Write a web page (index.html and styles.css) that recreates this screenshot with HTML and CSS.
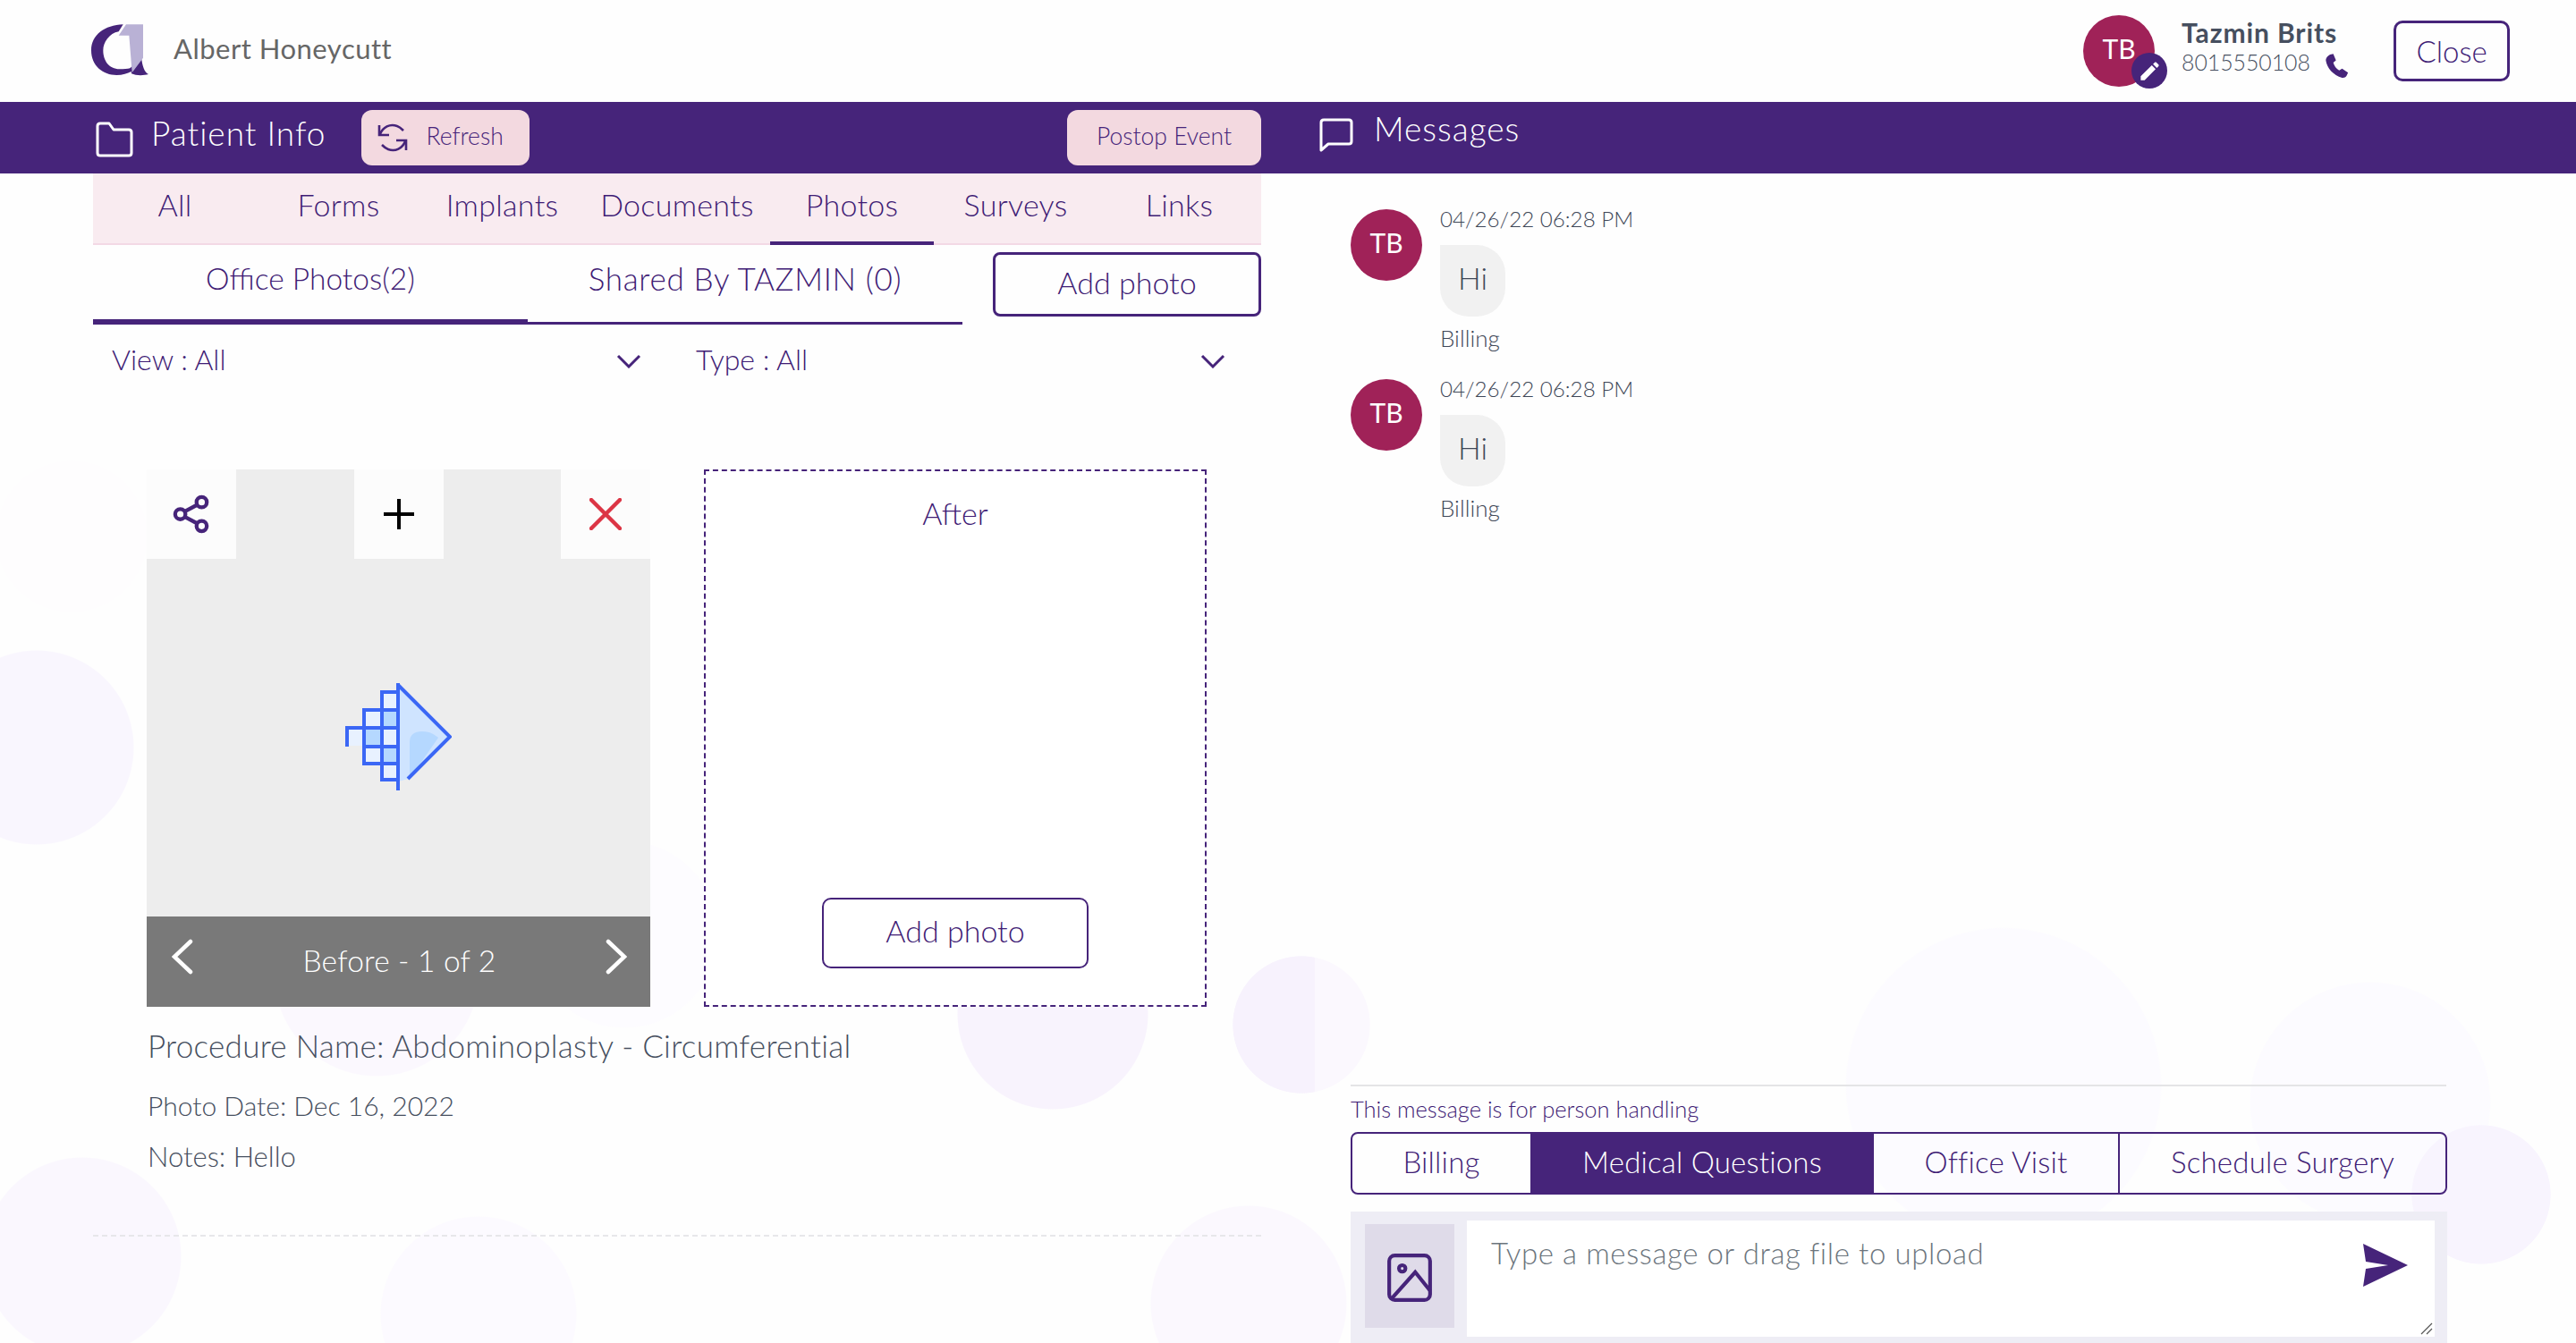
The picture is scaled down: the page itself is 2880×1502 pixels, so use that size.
FILE: index.html
```html
<!DOCTYPE html>
<html lang="en">
<head>
<meta charset="utf-8">
<title>Patient</title>
<link rel="stylesheet" href="styles.css">
</head>
<body>
<header class="topbar">
  <div class="brand">
    <svg class="logo" viewBox="0 0 192 172"><path fill="#46247a" d="M107 0C45 2 0 35 0 87c0 53 40 83 85 83 20 0 37-5 49-12l1 7c15 7 40 7 57 2-14-7-20-27-24-55l-38 35c-8 2-20 3-35 3-35 0-55-28-55-63 0-27 20-57 52-63z"/><path fill="#b9b1d5" d="M92 37L117 0h57v112l-37 50-10-125z"/></svg>
    <span class="brand-name">Albert Honeycutt</span>
  </div>
  <div class="user">
    <div class="avatar">TB
      <span class="badge"><svg viewBox="0 0 24 24"><path fill="#fff" d="M3 17.2V21h3.800L17.800 10l-3.800-3.800zM20.700 7c.4-.4.4-1 0-1.400l-2.300-2.300c-.4-.4-1-.4-1.400 0l-1.800 1.800 3.800 3.800z"/></svg></span>
    </div>
    <div class="user-text">
      <div class="user-name">Tazmin Brits</div>
      <div class="user-phone">8015550108
        <svg class="phone" viewBox="0 0 24 24"><path fill="#46247a" d="M6.600 1.500 9.300 1l2.400 5.800-2.400 2c.8 2.900 2.500 5.300 5.300 7l2.600-1.700 5.300 3.700-1.300 2.800c-.9 1.300-2.400 2.100-4 1.700C9.300 20.200 3.600 13.500 2.700 7c-.2-2.300 1.700-4.500 3.900-5.500z"/></svg>
      </div>
    </div>
    <button class="close-btn">Close</button>
  </div>
</header>

<main class="layout">
  <section class="patient">
    <div class="band patient-band">
      <svg class="band-icon" viewBox="0 0 42 40"><path fill="none" stroke="#fff" stroke-width="3" stroke-linejoin="round" d="M2 5q0-3 3-3h10l5 7h17q3 0 3 3v23q0 3-3 3H5q-3 0-3-3z"/></svg>
      <span class="band-title">Patient Info</span>
      <button class="band-btn refresh">
        <svg viewBox="0 0 36 36"><g fill="none" stroke="#46247a" stroke-width="2.600"><path d="M4 14C7 6 15 2 23 5c3 1 5 3 7 5"/><path d="M32 22c-3 8-11 12-19 9-3-1-5-3-7-5"/><path d="M3 4v11h11M33 32V21H22"/></g></svg>
        <span class="btn-label">Refresh</span>
      </button>
      <button class="band-btn postop"><span class="btn-label">Postop Event</span></button>
    </div>
    <nav class="tabs">
      <a class="tab">All</a><a class="tab">Forms</a><a class="tab">Implants</a><a class="tab">Documents</a><a class="tab active">Photos</a><a class="tab">Surveys</a><a class="tab">Links</a>
    </nav>
    <div class="subtabs">
      <a class="subtab active">Office Photos(2)</a>
      <a class="subtab wide">Shared By TAZMIN (0)</a>
      <button class="outline-btn sub-add">Add photo</button>
    </div>
    <div class="filters">
      <div class="filter">View : All <svg class="chev" viewBox="0 0 28 16"><path fill="none" stroke="#46247a" stroke-width="3" d="M2 2l12 12L26 2"/></svg></div>
      <div class="filter">Type : All <svg class="chev" viewBox="0 0 28 16"><path fill="none" stroke="#46247a" stroke-width="3" d="M2 2l12 12L26 2"/></svg></div>
    </div>
    <div class="photos">
      <div class="card">
        <div class="card-tools">
          <span class="tool"><svg viewBox="0 0 44 46"><g fill="none" stroke="#46247a" stroke-width="4.500"><circle cx="34" cy="9" r="6"/><circle cx="9" cy="23" r="6"/><circle cx="34" cy="37" r="6"/><path d="M14 20l15-8M14 26l15 8"/></g></svg></span>
          <span class="tool"><svg viewBox="0 0 36 36"><path stroke="#000" stroke-width="4" d="M18 1v34M1 18h34"/></svg></span>
          <span class="tool"><svg viewBox="0 0 36 36"><path stroke="#dc3545" stroke-width="4.500" stroke-linecap="round" d="M2 2l32 32M34 2L2 34"/></svg></span>
        </div>
        <div class="card-image">
          <svg class="placeholder" viewBox="0 0 119 120">
            <path fill="#cfe4ff" d="M59 2l58 58-46 47-12 3z"/>
            <path fill="#b5d8ff" d="M72 107V66q0-12 14-12c10 0 14 4 18 7z"/>
            <path fill="#e8f1ff" d="M40 10h19v98H40zM20 30h20v60H20zM4 50h16v20H4z"/>
            <path fill="#b5d8ff" d="M40 30h19v20H40zM20 50h20v21H20zM40 71h19v19H40z"/>
            <g fill="none" stroke="#3b67f5" stroke-width="4">
              <path d="M59 0v120M59 2l58 58-47 47"/>
              <path d="M59 10H41v98h18M59 30H21v60h38M59 50H2v21M21 71h38M41 30v60"/>
            </g>
          </svg>
        </div>
        <div class="card-foot">
          <svg viewBox="0 0 24 40"><path fill="none" stroke="#fff" stroke-width="4.500" stroke-linecap="round" d="M21 3L3 20l18 17"/></svg>
          <span class="foot-label">Before - 1 of 2</span>
          <svg viewBox="0 0 24 40"><path fill="none" stroke="#fff" stroke-width="4.500" stroke-linecap="round" d="M3 3l18 17L3 37"/></svg>
        </div>
      </div>
      <div class="after">
        <div class="after-title">After</div>
        <button class="outline-btn after-add">Add photo</button>
      </div>
    </div>
    <div class="details">
      <p class="proc">Procedure Name: Abdominoplasty - Circumferential</p>
      <p class="date">Photo Date: Dec 16, 2022</p>
      <p class="notes">Notes: Hello</p>
    </div>
    <div class="dash"></div>
  </section>

  <section class="messages">
    <div class="band messages-band">
      <svg class="msg-icon" viewBox="0 0 38 38"><path fill="none" stroke="#fff" stroke-width="3" stroke-linejoin="round" d="M2 5q0-3 3-3h28q3 0 3 3v21q0 3-3 3H10l-8 7z"/></svg>
      <span class="band-title">Messages</span>
    </div>
    <div class="thread">
      <article class="msg">
        <div class="avatar">TB</div>
        <div class="msg-body">
          <div class="msg-time">04/26/22 06:28 PM</div>
          <div class="bubble">Hi</div>
          <div class="msg-tag">Billing</div>
        </div>
      </article>
      <article class="msg">
        <div class="avatar">TB</div>
        <div class="msg-body">
          <div class="msg-time">04/26/22 06:28 PM</div>
          <div class="bubble">Hi</div>
          <div class="msg-tag">Billing</div>
        </div>
      </article>
    </div>
    <div class="compose">
      <div class="compose-label">This message is for person handling</div>
      <div class="segments">
        <a class="seg seg-billing">Billing</a>
        <a class="seg seg-medical active">Medical Questions</a>
        <a class="seg seg-office">Office Visit</a>
        <a class="seg seg-surgery">Schedule Surgery</a>
      </div>
      <div class="composer">
        <div class="attach">
          <svg viewBox="0 0 48 52"><g fill="none" stroke="#46247a" stroke-width="4"><rect x="2" y="2" width="44" height="48" rx="6"/><circle cx="16" cy="16" r="3.500"/><path d="M5 48L30 20l16 20"/></g></svg>
        </div>
        <div class="input">
          <span class="placeholder-text">Type a message or drag file to upload</span>
          <svg class="send" viewBox="0 0 50 48"><path fill="#46247a" d="M0 0l50 24L0 48l3-20 25-4-25-4z"/></svg>
          <svg class="grip" viewBox="0 0 14 14"><path stroke="#555" stroke-width="1.200" d="M13 1L1 13M13 7l-6 6"/></svg>
        </div>
      </div>
    </div>
  </section>
</main>
</body>
</html>
```
FILE: styles.css
```css
* { box-sizing: border-box; }
html, body { margin: 0; height: 100%; }
body {
  width: 2880px;
  height: 1502px;
  overflow: hidden;
  font-family: "Lato", "Open Sans", sans-serif;
  font-weight: 300;
  color: #3f1c75;
  background-color: #fefefe;
  background-image:
    radial-gradient(circle 77px at 1455px 1146px, #f7f2fd 99%, transparent 100%),
    radial-gradient(circle 77px at 1455px 1146px, #fbf8fe 99%, transparent 100%),
    radial-gradient(circle 109px at 41px 836px, #f9f6fe 99%, transparent 100%),
    radial-gradient(circle 111px at 92px 1405px, #faf7fe 99%, transparent 100%),
    radial-gradient(circle 107px at 1177px 1134px, #f8f3fd 99%, transparent 100%),
    radial-gradient(circle 115px at 421px 1089px, #fbf8fe 99%, transparent 100%),
    radial-gradient(circle 105px at 698px 1045px, #fdfcff 99%, transparent 100%),
    radial-gradient(circle 110px at 1396px 1458px, #fbf8fe 99%, transparent 100%),
    radial-gradient(circle 110px at 535px 1470px, #fcfaff 99%, transparent 100%),
    radial-gradient(circle 78px at 2774px 1336px, #f8f4fe 99%, transparent 100%),
    radial-gradient(circle 177px at 2240px 1214px, #fcfbff 99%, transparent 100%),
    radial-gradient(circle 135px at 2650px 1233px, #fcfbff 99%, transparent 100%),
    radial-gradient(circle 85px at 80px 600px, #fefdfe 99%, transparent 100%);
  background-size: 1470px 1502px, 100% 100%, 100% 100%, 100% 100%, 100% 100%, 100% 100%, 100% 100%, 100% 100%, 100% 100%, 100% 100%, 100% 100%, 100% 100%, 100% 100%;
  background-repeat: no-repeat;
}
button { font: inherit; color: inherit; background: none; cursor: pointer; }
p { margin: 0; }

/* top bar */
.topbar {
  height: 114px;
  display: flex;
  justify-content: space-between;
  align-items: center;
  padding: 0 74px 0 102px;
}
.brand { display: flex; align-items: center; gap: 28px; margin-top: -2px; }
.logo { width: 64px; height: 58px; }
.brand-name { font-size: 31px; font-weight: 400; color: #666; letter-spacing: .5px; margin-bottom: 4px; }
.user { display: flex; align-items: center; }
.avatar {
  width: 80px; height: 80px; flex: none;
  border-radius: 50%;
  background: #a02258;
  color: #fff;
  font-size: 30px;
  font-weight: 400;
  display: flex; align-items: center; justify-content: center;
  padding-bottom: 6px;
  position: relative;
}
.badge {
  position: absolute; right: -14px; bottom: -2px;
  width: 40px; height: 40px;
  border-radius: 50%;
  background: #46247a;
  display: flex; align-items: center; justify-content: center;
}
.badge svg { width: 27px; height: 27px; }
.user-text { width: 185px; margin-left: 30px; color: #464f5f; margin-top: -4px; }
.user-name { font-size: 30px; font-weight: 700; letter-spacing: .9px; line-height: 30px; white-space: nowrap; }
.user-phone { font-size: 24.800px; line-height: 26px; display: flex; align-items: center; gap: 14px; white-space: nowrap; }
.phone { width: 30px; height: 30px; flex: none; margin-top: 8px; }
.close-btn {
  width: 130px; height: 68px;
  margin-left: 52px;
  border: 3px solid #46247a;
  border-radius: 10px;
  font-size: 33px;
  padding: 0;
}

/* layout */
.layout { display: grid; grid-template-columns: 1410px 1fr; height: 1388px; }
.patient { padding-left: 104px; display: flex; flex-direction: column; }
.band { height: 80px; background: #46247a; color: #fff; display: flex; }
.patient-band { margin-left: -104px; padding: 0 0 0 107px; align-items: center; }
.band-icon { width: 42px; height: 40px; margin-top: 4px; }
.band-title { font-size: 37px; letter-spacing: 1px; }
.patient-band .band-title { margin-left: 20px; margin-bottom: 11px; }
.band-btn {
  height: 62px;
  border: 0;
  border-radius: 12px;
  background: #f3d9e0;
  color: #46247a;
  font-size: 26.500px;
  display: flex; align-items: center;
  padding: 0;
}
.btn-label { margin-bottom: 4px; }
.refresh { width: 188px; margin-left: 40px; padding-left: 17px; gap: 19px; }
.refresh svg { width: 36px; height: 36px; }
.postop { width: 217px; margin-left: auto; justify-content: center; }

/* tabs */
.tabs {
  height: 80px;
  display: grid;
  grid-template-columns: repeat(3, 183px) 208px repeat(3, 183px);
  background: #f9ebf0;
  border-bottom: 2px solid #f3d9e5;
}
.tab {
  font-size: 34px;
  display: flex; align-items: center; justify-content: center;
  padding-bottom: 10px;
  letter-spacing: .3px;
}
.tab.active { border-bottom: 4px solid #46247a; margin-bottom: -2px; padding-bottom: 8px; }

.subtabs { height: 89px; display: flex; align-items: flex-start; }
.subtab {
  width: 486px; height: 89px;
  font-size: 33.500px;
  display: flex; align-items: center; justify-content: center;
  padding-bottom: 12px;
  border-bottom: 3px solid #46247a;
}
.subtab.wide { font-size: 35px; letter-spacing: .7px; }
.subtab.active { border-bottom-width: 6px; padding-bottom: 9px; }
.outline-btn {
  border: 3px solid #46247a;
  border-radius: 8px;
  font-size: 34px;
  padding: 0 0 6px;
}
.sub-add { width: 300px; height: 72px; margin: 8px 0 0 34px; }

.filters { height: 80px; display: grid; grid-template-columns: 1fr 1fr; padding-top: 20px; }
.filter {
  font-size: 32px;
  height: 40px;
  display: flex; align-items: center; justify-content: space-between;
  padding: 0 40px 3px 21px;
}
.chev { width: 28px; height: 16px; margin-top: 5px; }

/* photos */
.photos {
  display: grid;
  grid-template-columns: 563px 562px;
  gap: 60px;
  padding: 82px 0 0 60px;
}
.card { display: flex; flex-direction: column; height: 601px; background: #ededed; }
.card-tools { display: flex; justify-content: space-between; }
.tool { width: 100px; height: 100px; background: #fcfcfc; display: flex; align-items: center; justify-content: center; }
.tool svg { width: 42px; height: 44px; }
.tool:nth-child(2) svg, .tool:nth-child(3) svg { width: 36px; height: 36px; }
.card-image { flex: 1; display: flex; align-items: center; justify-content: center; }
.placeholder { width: 119px; height: 120px; margin-top: -2px; }
.card-foot {
  height: 101px;
  background: #797979;
  color: #fff;
  font-size: 33.500px;
  display: flex; align-items: center; justify-content: space-between;
  padding: 0 26px 0 28px;
}
.foot-label { margin-bottom: 4px; letter-spacing: .2px; }
.card-foot svg { width: 24px; height: 40px; margin-top: -12px; }
.after {
  height: 601px;
  border: 2px dashed #46247a;
  display: flex; flex-direction: column; align-items: center; justify-content: space-between;
  padding: 26px 0 41px;
  background: #fff;
}
.after-title { font-size: 34px; }
.after-add { width: 298px; height: 79px; border-width: 2px; border-radius: 10px; }

/* details */
.details { padding: 22px 0 0 61px; color: #464f5f; }
.proc { font-size: 35px; line-height: 42px; letter-spacing: .28px; }
.date { font-size: 30px; line-height: 38px; margin-top: 27px; }
.notes { font-size: 31px; line-height: 38px; margin-top: 19px; }
.dash { border-top: 2px dashed #e7e7ea; margin-top: 69px; }

/* messages */
.messages { display: flex; flex-direction: column; }
.messages-band { padding: 7px 0 0 65px; gap: 23px; align-items: flex-start; }
.msg-icon { width: 38px; height: 38px; margin-top: 11px; }
.thread { flex: 1; padding: 40px 0 0 100px; }
.msg { display: flex; gap: 20px; height: 190px; }
.msg-body { color: #3f4858; margin-top: -4px; }
.msg-time { font-size: 24.200px; line-height: 30px; }
.bubble {
  width: 73px; height: 80px; margin-top: 14px;
  background: #f1f1f1;
  border-radius: 0 32px 32px 32px;
  font-size: 34px;
  display: flex; align-items: center; justify-content: center;
  padding-bottom: 8px;
}
.msg-tag { font-size: 26px; line-height: 30px; margin-top: 9px; }

.compose { padding: 0 144px 0 100px; height: 289px; display: flex; flex-direction: column; }
.compose-label {
  border-top: 2px solid #e4e4e6;
  margin-right: 1px;
  font-size: 25.500px;
  line-height: 30px;
  padding-top: 10px;
  height: 52px;
}
.segments { display: flex; height: 70px; margin-top: 1px; border: 2px solid #46247a; border-radius: 8px; overflow: hidden; }
.seg { font-size: 33px; letter-spacing: .2px; display: flex; align-items: center; justify-content: center; padding-bottom: 5px; }
.seg-billing { width: 199px; }
.seg-medical { width: 384px; background: #46247a; color: #fff; }
.seg-office { width: 275px; border-right: 2px solid #46247a; }
.seg-surgery { flex: 1; }
.composer {
  flex: 1;
  margin-top: 19px;
  background: #eeedf5;
  display: flex;
  gap: 14px;
  padding: 10px 14px 7px 16px;
}
.attach {
  width: 100px;
  margin: 4px 0 10px;
  background: #dfdbe9;
  display: flex; align-items: center; justify-content: center;
}
.attach svg { width: 50px; height: 54px; margin-top: 3px; }
.input { flex: 1; background: #fff; position: relative; padding: 16px 27px; }
.placeholder-text { font-size: 33px; color: #6c757d; letter-spacing: .6px; }
.send { position: absolute; right: 30px; top: 26px; width: 50px; height: 48px; }
.grip { position: absolute; right: 2px; bottom: 2px; width: 14px; height: 14px; }
```
